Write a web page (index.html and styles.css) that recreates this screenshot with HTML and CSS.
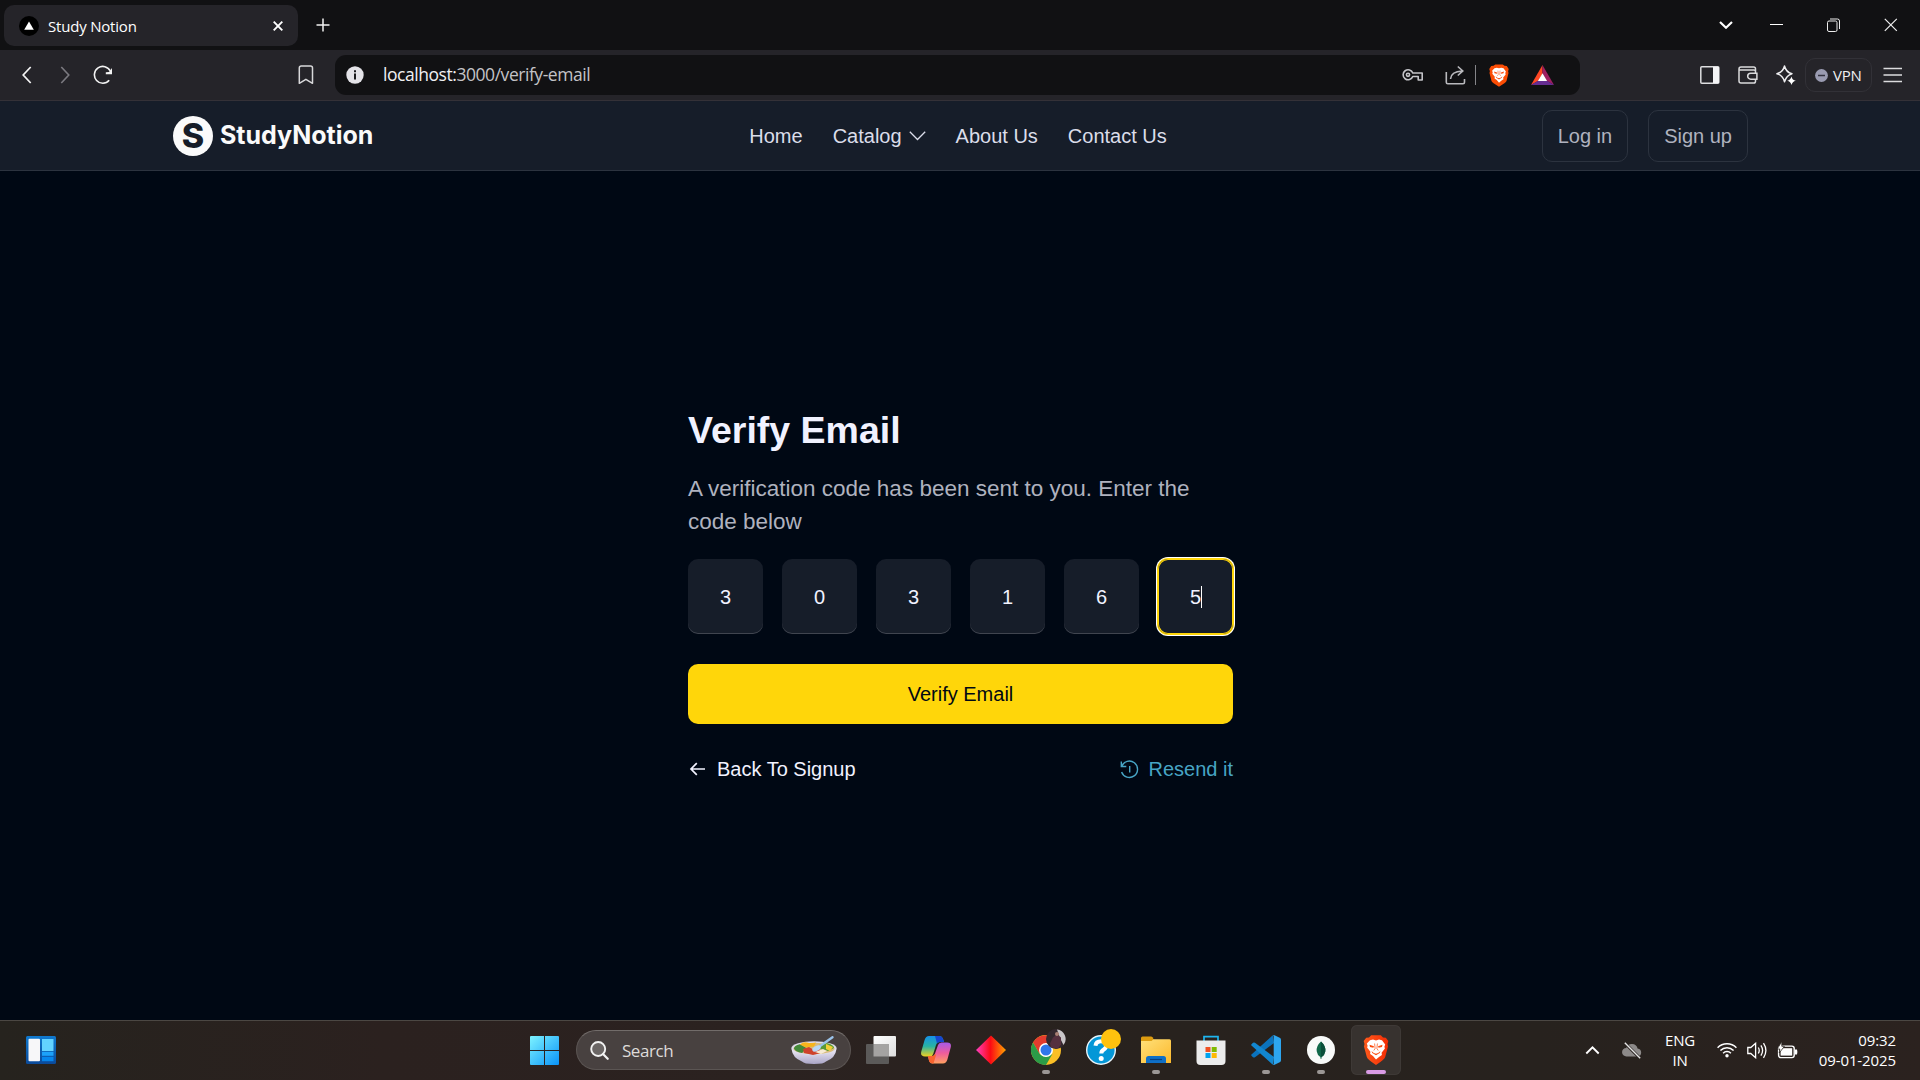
FILE: index.html
```
<!DOCTYPE html>
<html lang="en">
<head>
<meta charset="utf-8">
<title>Study Notion</title>
<link rel="stylesheet" href="styles.css">
</head>
<body>
<svg width="0" height="0" class="defs">
  <defs>
    <linearGradient id="lionG" x1="0" y1="0" x2="1" y2="0"><stop offset="0" stop-color="#ff5a1c"/><stop offset="1" stop-color="#f22c04"/></linearGradient>
    <linearGradient id="winG" x1="0" y1="0" x2="1" y2="1"><stop offset="0" stop-color="#7df3ff"/><stop offset="1" stop-color="#0a93f8"/></linearGradient>
    <linearGradient id="bowlG" x1="0" y1="0" x2="0" y2="1"><stop offset="0" stop-color="#f1effa"/><stop offset="1" stop-color="#aaa5c6"/></linearGradient>
    <linearGradient id="copA" x1="0" y1="0" x2="0" y2="1"><stop offset="0" stop-color="#1690e8"/><stop offset=".5" stop-color="#28b3a4"/><stop offset="1" stop-color="#f0d020"/></linearGradient>
    <linearGradient id="copB" x1="0" y1="0" x2="0" y2="1"><stop offset="0" stop-color="#a65ae8"/><stop offset=".5" stop-color="#ee5c9c"/><stop offset="1" stop-color="#ffa060"/></linearGradient>
    <linearGradient id="diaG"><stop offset="0" stop-color="#ff3fc0"/><stop offset=".48" stop-color="#fb0a14"/><stop offset="1" stop-color="#ffa400"/></linearGradient>
    <linearGradient id="folG" x1="0" y1="0" x2="1" y2="1"><stop offset="0" stop-color="#ffe07a"/><stop offset="1" stop-color="#fcb92c"/></linearGradient>
    <linearGradient id="widG" x1="0" y1="0" x2="0" y2="1"><stop offset="0" stop-color="#0f79cf"/><stop offset="1" stop-color="#0b4a9a"/></linearGradient>
    <linearGradient id="tvG" x1="0" y1="0" x2="1" y2="1"><stop offset="0" stop-color="#fff"/><stop offset="1" stop-color="#ddd"/></linearGradient>
    <symbol id="face" viewBox="0 0 24 28">
      <path d="M6 5.200 9 4.600l3 .8 3-.8 3 .6 3.200 4.300-.8 2.300.5 1.700-3.300 4.200.3 2.200-2.900 2.100L12 24.600l-3-3.600-2.900-2.100.3-2.200-3.300-4.200.5-1.700-.8-2.300z" fill="#fff"/>
      <path d="M5.500 9.800 10 11.300 9.400 12.700 6 12zM18.500 9.800 14 11.300l.6 1.400 3.400-.7zM7.500 16l2.300 2 2.200.7 2.200-.7 2.300-2-.8 2L12 20.300 8.300 18z" fill="#fb4a0c"/>
      <path d="M10.600 8.500l.5 5-1.300 2M13.400 8.500l-.5 5 1.300 2" stroke="#fb4a0c" stroke-width=".7" fill="none"/>
    </symbol>
  </defs>
</svg>

<header class="tabs">
  <div class="tab">
    <svg width="20" height="20" viewBox="0 0 20 20"><circle cx="10" cy="10" r="10" fill="#000"/><path d="M10 5.500l4.800 8.300H5.200z" fill="#fff"/></svg>
    <span class="tab-title">Study Notion</span>
    <svg class="tab-close" width="12" height="12" viewBox="0 0 12 12"><path d="M1.700 1.700l8.600 8.600M10.300 1.700l-8.600 8.600" stroke="#fff" stroke-width="1.900" fill="none"/></svg>
  </div>
  <svg class="plus" width="14" height="14" viewBox="0 0 14 14"><path d="M7 .5v13M.5 7h13" stroke="#f2f2f2" stroke-width="1.500"/></svg>
  <div class="win">
    <svg width="14" height="8" viewBox="0 0 14 8"><path d="M1 1l6 5.700L13 1" stroke="#fff" stroke-width="2.200" fill="none"/></svg>
    <svg width="14" height="14" viewBox="0 0 14 14"><path d="M0 6.500h13" stroke="#fff" stroke-width="1"/></svg>
    <svg width="14" height="14" viewBox="0 0 14 14" fill="none" stroke="#eee"><rect x=".5" y="3" width="9.500" height="10.500" rx="1.500"/><path d="M3 1h7.500q2 0 2 2v8"/></svg>
    <svg width="14" height="14" viewBox="0 0 14 14"><path d="M.8.800l12 12M12.800.800l-12 12" stroke="#eee" stroke-width="1.200"/></svg>
  </div>
</header>

<div class="toolbar">
  <svg class="back" width="10" height="18" viewBox="0 0 10 18"><path d="M8.700 1L1.200 9l7.500 8" stroke="#f4f4f4" stroke-width="1.700" fill="none"/></svg>
  <svg class="fwd" width="10" height="18" viewBox="0 0 10 18"><path d="M1.300 1l7.500 8-7.500 8" stroke="#7b7a80" stroke-width="1.600" fill="none"/></svg>
  <svg class="reload" width="20" height="20" viewBox="0 0 20 20"><path d="M16.200 15.300A8.400 8.400 0 1 1 17.300 6" stroke="#f2f2f2" stroke-width="1.600" fill="none"/><path d="M19 3v6.200h-6.200V7.300L16 7z" fill="#f2f2f2"/></svg>
  <svg class="mark" width="16" height="20" viewBox="0 0 16 20"><path d="M1.300 18.300V3Q1.300 1 3.300 1h9.200q2 0 2 2v15.300L7.900 14.300z" stroke="#d8d8da" stroke-width="1.500" fill="none" stroke-linejoin="round"/></svg>
  <div class="url">
    <svg width="18" height="18" viewBox="0 0 18 18"><circle cx="9" cy="9" r="8.700" fill="#e4e3e8"/><path d="M8 4.200h2v2H8zM8 7.600h2v6H8z" fill="#19191c"/></svg>
    <span class="url-text"><b>localhost:</b>3000/verify-email</span>
    <svg class="key" width="22" height="14" viewBox="0 0 22 14" fill="none" stroke="#c4c4c8" stroke-width="1.600"><path d="M10.800 5H20.200v7h-4V8.500h-5.400A5 5 0 1 1 10.800 5z" stroke-linejoin="round"/><circle cx="6" cy="6.800" r="1.600"/></svg>
    <svg class="share" width="21" height="20" viewBox="0 0 21 20" fill="none" stroke="#b9b9bd" stroke-width="1.600"><path d="M1.300 7v10.200q0 1.500 1.500 1.500H18q1.500 0 1.500-1.500V14M5.500 14Q6 6.500 17.300 6M12.800 1.500l5 4.500-5 4.500"/></svg>
    <i class="bar"></i>
    <svg class="brave" width="20" height="23" viewBox="0 0 20 23"><path d="M4.500 1.800 6.300.4h7.400l1.800 1.400 2.300.2 1.900 3-.6 2.200.4 1.800-2 8Q17 18.600 10 22.800 3 18.600 2.500 17L.5 9l.4-1.800L.3 5l1.900-3z" fill="#fb4d05"/><use href="#face" x="1" y="0" width="18" height="21.500"/></svg>
    <svg class="bat" width="23" height="20" viewBox="0 0 23 20"><path d="M11.500 0L0 20l7.400-4.200 4.100-7.400z" fill="#ff4724"/><path d="M11.500 0L23 20l-7.400-4.200-4.100-7.400z" fill="#9e1f63"/><path d="M0 20h23l-7.400-4.400H7.400z" fill="#662d91"/><path d="M11.500 8.200l4.600 7.900H6.900z" fill="#fff"/></svg>
  </div>
  <div class="tools">
    <svg width="20" height="18" viewBox="0 0 20 18"><rect x=".8" y=".8" width="18" height="16.400" rx="1" fill="none" stroke="#dedee0" stroke-width="1.500"/><path d="M13 1h6v16h-6z" fill="#f4f4f6"/></svg>
    <svg width="20" height="18" viewBox="0 0 20 18" fill="none" stroke="#dadadc" stroke-width="1.500"><path d="M17.500 5V2.800q0-1.800-1.800-1.800H3Q1 1 1 3v12q0 2 2 2h12.700q1.800 0 1.800-1.800V5.300Q17.500 4 16 4H1.500"/><path d="M18.900 7.200h-6.200a3 3 0 0 0 0 6h6.200z" fill="#252429"/></svg>
    <svg width="20" height="20" viewBox="0 0 20 20"><path d="M8.500 1q1.500 6.300 7.500 7.700-5.500 1.500-7.500 8-1.800-6.500-7.600-8Q7 7.300 8.500 1z" fill="none" stroke="#efeff1" stroke-width="1.500" stroke-linejoin="round"/><path d="M15.500 11.500q.8 3.800 4.300 4.300-3.500.7-4.300 4.200-.8-3.500-4.300-4.200 3.500-.7 4.300-4.300z" fill="#fff"/></svg>
    <div class="vpn"><svg width="13" height="13" viewBox="0 0 13 13"><circle cx="6.500" cy="6.500" r="6.400" fill="#9a9bb1"/><path d="M3 6.500h7" stroke="#333340" stroke-width="1.500"/></svg><span>VPN</span></div>
    <svg class="menu" width="20" height="16" viewBox="0 0 20 16"><path d="M.5 1.500h18.500M.5 8h18.500M.5 14.500h18.500" stroke="#dcdcde" stroke-width="1.600"/></svg>
  </div>
</div>

<nav class="nav">
  <div class="logo">
    <span class="disc">S</span>
    <span class="word">StudyNotion</span>
  </div>
  <div class="links">
    <a>Home</a>
    <a>Catalog<svg width="17" height="10" viewBox="0 0 17 10"><path d="M.8.800l7.700 7.700L16.200.800" fill="none" stroke="#dbddea" stroke-width="1.300"/></svg></a>
    <a>About Us</a>
    <a>Contact Us</a>
  </div>
  <div class="auth"><a class="btn">Log in</a><a class="btn">Sign up</a></div>
</nav>

<main class="page">
  <section class="card">
    <h1>Verify Email</h1>
    <p>A verification code has been sent to you. Enter the code below</p>
    <div class="otp"><span>3</span><span>0</span><span>3</span><span>1</span><span>6</span><span class="focus">5<i></i></span></div>
    <div class="submit">Verify Email</div>
    <div class="foot">
      <span class="backlink"><svg width="22" height="20" viewBox="0 0 22 20"><path d="M18 10H4.500M9.800 4.200L4 10l5.800 5.800" fill="none" stroke="#f1f2ff" stroke-width="1.700"/></svg>Back To Signup</span>
      <span class="resend"><svg width="19" height="19" viewBox="0 0 19 19" fill="none" stroke="#47a5c5" stroke-width="1.400"><path d="M1.300 1.500v5h5M1.700 6.300A8.200 8.200 0 1 1 1.600 12M9.700 6v6.500"/></svg>Resend it</span>
    </div>
  </section>
</main>

<footer class="taskbar">
  <svg class="widgets" width="30" height="28" viewBox="0 0 30 28"><rect width="30" height="28" rx="1.500" fill="url(#widG)"/><rect x="2.500" y="2.700" width="11.500" height="22.500" rx="1" fill="#f7f7f9"/><path d="M16 3h11.500v12H16z" fill="#63d3ff"/><path d="M16 15.800h11.500v4H16z" fill="#1ca2fa"/><path d="M16 20.800h11.500v4.400H16z" fill="#0686ec"/></svg>
  <div class="tile start"><svg width="29" height="29" viewBox="0 0 29 29"><path d="M0 1q0-1 1-1h13v14H0zM15 0h13q1 0 1 1v13H15zM0 15h14v14H1q-1 0-1-1zM15 15h14v13q0 1-1 1H15z" fill="url(#winG)"/></svg></div>
  <div class="search">
    <svg width="19" height="19" viewBox="0 0 19 19"><circle cx="8.200" cy="8" r="7" fill="#6b6665" stroke="#f2f2f2" stroke-width="1.900"/><path d="M13 13l4.700 4.800" stroke="#f2f2f2" stroke-width="2.200" stroke-linecap="round"/></svg>
    <span>Search</span>
    <svg class="bowl" width="46" height="28" viewBox="0 0 46 28"><path d="M.4 12.500Q1.500 22 11 25.500q2 2.500 12 2.500t12-2.500Q44.500 22 45.600 12.500z" fill="url(#bowlG)"/><ellipse cx="23" cy="12" rx="22.600" ry="6.800" fill="#dedbea"/><ellipse cx="23" cy="12.500" rx="20.500" ry="5.700" fill="#d9bb7a"/><path d="M3 12.500q0-3 6-4.300l7 4-5 4.800q-7-1.500-8-4.500z" fill="#43893a"/><path d="M9 8.500q3-3 7-2t9 0l-2 4-8 1z" fill="#f7b51c"/><path d="M28 9l8-2q7 2 7 5l-6 3-8-2z" fill="#5a9a35"/><path d="M35 8l7 3-3 4-4-2z" fill="#f4cf37"/><path d="M12 13l6-2 5 3 6-1 1 4-8 2-9-2z" fill="#ce422c"/><path d="M24 16l8-3 4 2-6 3z" fill="#f6ead2"/><path d="M27 11.500L41.500 1.200" stroke="#9bc3ea" stroke-width="2.300" stroke-linecap="round"/><ellipse cx="25.500" cy="12.500" rx="4.500" ry="2.500" transform="rotate(-25 25.500 12.500)" fill="#b9d8f4"/></svg>
  </div>
  <div class="apps">
    <div class="tile"><svg width="30" height="28" viewBox="0 0 30 28"><rect x="7.500" y="0" width="22.500" height="20.500" rx="1" fill="url(#tvG)"/><rect x="0" y="8" width="23" height="20" rx="1" fill="#5b5a59"/><path d="M7.500 8H23v12.500H7.500z" fill="#a4a3a2"/></svg></div>
    <div class="tile"><svg width="30" height="28" viewBox="0 0 30 28"><path d="M8 0h10.500q2.600 0 3.400 2.500L23 6h-4q-3 0-4 3l-2.800 9q-.8 2.500-3.400 2.500H4q-5 0-3.700-5L3.600 4Q4.800 0 8 0z" fill="url(#copA)"/><path d="M14 0h4.500q2.600 0 3.400 2.500L23 6h-4q-2 0-3 1.500z" fill="#1746cf"/><path d="M22 27.500H11.500q-2.600 0-3.400-2.500L7 20.500h3q3 0 4-3L17 9q1-2.500 3.400-2.500H26q5 0 3.700 5L26.400 23.500Q25.200 27.500 22 27.500z" fill="url(#copB)"/><path d="M7 20h4q2 0 3-2l1 1-2.500 8.500h-1q-2.600 0-3.400-2.500z" fill="#f8642f"/></svg></div>
    <div class="tile"><svg width="30" height="30" viewBox="0 0 30 30"><path d="M15 .5L30 15 15 29.500 0 15z" fill="url(#diaG)"/></svg></div>
    <div class="tile dot"><svg width="30" height="30" viewBox="0 0 30 30"><circle cx="15" cy="15" r="15" fill="#fbbf26"/><path d="M2 7.500L8.500 18.800 15 8h13A15 15 0 0 0 2 7.500z" fill="#e33b2e"/><path d="M2 7.500A15 15 0 0 0 15 30l6.500-11.200q-7 6-13 0z" fill="#2b9c48"/><circle cx="15" cy="15" r="7" fill="#fff"/><circle cx="15" cy="15" r="5.500" fill="#2f76ea"/></svg><svg class="badge" width="20" height="20" viewBox="0 0 20 20"><circle cx="10" cy="10" r="10" fill="#33282e"/><path d="M11 .5a9.600 9.600 0 0 1 6.500 15.500L14 9z" fill="#c9c6c8"/><path d="M5 18.500l-1-4 3-6 4-3 4 3v7l-3 4z" fill="#55303f"/><circle cx="11" cy="5" r="2" fill="#a98074"/></svg></div>
    <div class="tile"><svg width="30" height="30" viewBox="0 0 30 30"><circle cx="15" cy="15" r="14.300" fill="#0497d7" stroke="#e9f5fb" stroke-width="1.400"/><path d="M9.500 10.800Q10 6.300 15 6.300t5.300 4.200q0 2.500-2.800 4.200Q15.300 16 15.300 18.500" fill="none" stroke="#fff" stroke-width="4"/><circle cx="15.200" cy="23.500" r="2.500" fill="#fff"/></svg><i class="badge sun"></i></div>
    <div class="tile dot"><svg width="30" height="28" viewBox="0 0 30 28"><path d="M0 2q0-1.500 1.500-1.500H10q1 0 1.500.8L13.500 5H0z" fill="#dd9c10"/><path d="M0 5h10.500l2-1.700H28.500q1.500 0 1.500 1.500V27H0z" fill="url(#folG)"/><path d="M5 27v-4.500Q5 20 7.500 20h15q2.500 0 2.500 2.500V27z" fill="#0f6fc6"/><path d="M9 23.500h12" stroke="#083f80" stroke-width="1.200"/></svg></div>
    <div class="tile"><svg width="30" height="30" viewBox="0 0 30 30"><path d="M8 6V1.700h14V6" fill="none" stroke="#1eb5ef" stroke-width="1.700"/><path d="M.5 5.500h29V26q0 4-4 4h-21q-4 0-4-4z" fill="#ececec"/><path d="M9.500 12h5v5h-5z" fill="#f05022"/><path d="M15.700 12h5v5h-5z" fill="#7fba00"/><path d="M9.500 18h5v5h-5z" fill="#00a3ee"/><path d="M15.700 18h5v5h-5z" fill="#ffb901"/></svg></div>
    <div class="tile dot"><svg width="30" height="30" viewBox="0 0 30 30"><path d="M1 19L21.800.300 23 8 4 22.200q-1 .7-2 0L.5 20.700q-.8-.9.500-1.700z" fill="#0b73bd"/><path d="M1 11Q-.3 10.200.5 9.300L2 7.800q1-.8 2 0L23 22l-1.200 7.700z" fill="#1287d0"/><path d="M21.800.300Q22.500-.2 23.500.300l5.200 2.500q1.300.6 1.300 2v20.400q0 1.400-1.300 2l-5.200 2.500q-1 .5-1.700 0 .9.200.9-1.200V1.500q0-1.400-.9-1.200z" fill="#2da6f0"/></svg></div>
    <div class="tile dot"><svg width="28" height="28" viewBox="0 0 28 28"><circle cx="14" cy="14" r="14" fill="#f8faf9"/><path d="M14 5.500q5 4.500 4.300 9.800-.6 4-3.600 5.700l-.4 2h-.6l-.4-2q-3-1.700-3.600-5.700Q9 10 14 5.500z" fill="#11684a"/><path d="M14 5.500q5 4.500 4.300 9.800-.6 4-3.600 5.700l-.7-1z" fill="#0b4f3a"/></svg></div>
    <div class="tile active"><svg width="26" height="30" viewBox="0 0 26 30"><path d="M6 2.500 8.200.2h9.600L20 2.500l2.800.2L25.300 6l-.8 3 .5 2.500-2.800 10.500Q21.500 24.500 13 30 4.500 24.500 3.800 22L1 11.500 1.500 9 .7 6l2.500-3.300z" fill="url(#lionG)"/><use href="#face" x="1" y="0" width="24" height="28"/></svg></div>
  </div>
  <div class="tray">
    <svg class="up" width="15" height="10" viewBox="0 0 15 10"><path d="M1.300 8.500l6.200-6.200 6.200 6.200" fill="none" stroke="#fff" stroke-width="1.900"/></svg>
    <svg class="cloud" width="20" height="17" viewBox="0 0 20 17"><path d="M4.500 14.500a4.300 4.300 0 0 1-.3-8.600 6 6 0 0 1 11.400.5 4.100 4.100 0 0 1 .2 8.100z" fill="#8d8a89"/><path d="M2.500.800l15.500 15.500" stroke="#2a2420" stroke-width="3"/><path d="M2.800.800l15.400 15.400" stroke="#e5e5e5" stroke-width="1.400"/></svg>
    <div class="lang"><span>ENG</span><span>IN</span></div>
    <svg class="wifi" width="20" height="16" viewBox="0 0 20 16" fill="none" stroke="#fff" stroke-width="1.500"><path d="M.6 5.700a13.300 13.300 0 0 1 18.800 0M3.400 8.500a9.300 9.300 0 0 1 13.200 0M6.100 11.200a5.500 5.500 0 0 1 7.800 0"/><circle cx="10" cy="13.800" r="1.700" fill="#fff" stroke="none"/></svg>
    <svg class="vol" width="20" height="17" viewBox="0 0 20 17" fill="none" stroke="#fff" stroke-width="1.300"><path d="M.8 5.500h3L8.600 1.300v14.400L3.800 11.500h-3zM11.300 5.500q1.900 3 0 6M13.900 3.300q3.400 5.200 0 10.400M16.500 1.200q4.800 7.300 0 14.600"/></svg>
    <svg class="batt" width="21" height="17" viewBox="0 0 21 17"><rect x="1.600" y="4.100" width="15.600" height="11.500" rx="2.300" fill="none" stroke="#fff" stroke-width="1.400"/><rect x="3.600" y="6.200" width="11.600" height="7.400" fill="#fff"/><path d="M18 7.500h2q.8 2.500 0 5h-2z" fill="#fff"/><path d="M4.800-.5L.2 7h2.600l-.6 4L7.400 4.300H4.800z" fill="#fff" stroke="#2a2420" stroke-width=".8"/></svg>
    <div class="clock"><span>09:32</span><span>09-01-2025</span></div>
  </div>
</footer>
</body>
</html>
```
FILE: styles.css
```
* { box-sizing: border-box; }
body {
  margin: 0; width: 1920px; height: 1080px; overflow: hidden;
  display: flex; flex-direction: column;
  background: #000814; color: #fff;
  font-family: "Liberation Sans", Arial, sans-serif;
}
svg { display: block; flex: none; }
.defs { position: absolute; }
i { display: block; }

.tabs { height: 50px; flex: none; background: #111113; display: flex; align-items: center; padding-left: 4px; font-family: "Open Sans", sans-serif; }
.tab { width: 294px; height: 41px; margin-top: 1px; border-radius: 10px; background: #252429; display: flex; align-items: center; padding: 0 14px 0 15px; }
.tab-title { margin-left: 9px; font-size: 15px; letter-spacing: -.2px; white-space: nowrap; }
.tab-close { margin-left: auto; }
.plus { margin-left: 18px; }
.win { margin-left: auto; margin-right: 22px; display: flex; align-items: center; gap: 43px; }
.win svg:first-child { margin-right: -6px; }

.toolbar { height: 51px; flex: none; background: #252429; border-bottom: 1px solid #343137; display: flex; align-items: center; padding-left: 22px; font-family: "Open Sans", sans-serif; }
.fwd { margin-left: 28px; }
.reload { margin-left: 23px; }
.mark { margin-left: 185px; }
.url { margin-left: 21px; width: 1245px; height: 40px; border-radius: 11px; background: #111113; display: flex; align-items: center; padding-left: 11px; }
.url-text { margin-left: 19px; width: 1019px; margin-top: -2px; font-size: 17.500px; letter-spacing: -.45px; color: #c3c3c7; white-space: nowrap; }
.url-text b { font-weight: 400; color: #f0f0f2; }
.share { margin-left: 21px; }
.bar { margin-left: 9px; width: 1px; height: 20px; background: #858589; }
.brave { margin-left: 13px; }
.bat { margin-left: 22px; }
.tools { display: flex; align-items: center; margin-left: 120px; }
.tools svg + svg { margin-left: 18px; }
.vpn { margin-left: 9px; width: 67px; height: 34px; border: 1px solid #323137; border-radius: 10px; display: flex; align-items: center; padding-left: 9px; font-size: 15px; letter-spacing: -.2px; }
.vpn span { margin-left: 5px; margin-top: -1px; color: #f0f0f2; }
.menu { margin-left: 11px; }

.nav { height: 70px; flex: none; background: #161d29; border-bottom: 1px solid #2c333f; display: flex; justify-content: space-between; align-items: center; padding: 0 172px 0 173px; font-size: 20px; }
.logo { display: flex; align-items: center; gap: 7px; }
.disc { width: 40px; height: 40px; border-radius: 50%; background: #fafafa; color: #161d29; display: flex; align-items: center; justify-content: center; font: 800 34px/40px Inter, sans-serif; }
.word { font: 700 25px/30px Inter, sans-serif; color: #fafafa; margin-top: -2px; }
.links { display: flex; gap: 30px; color: #dbddea; margin: 1px 0 0 1px; }
.links a { display: flex; align-items: center; gap: 7px; }
.auth { display: flex; gap: 20px; color: #afb2bf; }
.btn { height: 52px; line-height: 50px; border: 1px solid #2c333f; border-radius: 10px; padding: 0 15px; }

.page { flex: 1; display: flex; align-items: center; justify-content: center; }
.card { width: 545px; margin-left: 1px; }
h1 { margin: 0; font-size: 37.500px; line-height: 47.500px; font-weight: 700; color: #f1f2ff; }
p { margin: 19px 0 21px; font-size: 22.500px; line-height: 32.500px; color: #afb2bf; }
.otp { display: flex; justify-content: space-between; }
.otp span { width: 75px; height: 75px; padding-top: 1px; border-radius: 10px; background: #161d29; box-shadow: inset 0 -1px 0 rgba(255,255,255,.18); display: flex; align-items: center; justify-content: center; font-size: 20px; color: #f1f2ff; }
.otp .focus { box-shadow: 0 0 0 1px #ffd60a, 0 0 0 2px #fff, inset 0 0 0 1px #ffd60a; }
.otp .focus i { width: 1px; height: 22px; background: #fff; margin-right: -1px; }
.submit { margin-top: 30px; height: 60px; border-radius: 10px; background: #ffd60a; color: #000814; font-size: 20px; display: flex; align-items: center; justify-content: center; }
.foot { margin-top: 30px; height: 30px; display: flex; justify-content: space-between; font-size: 20px; color: #f1f2ff; }
.foot span { display: flex; align-items: center; }
.backlink svg { margin-right: 8px; margin-left: -1px; }
.resend { color: #47a5c5; }
.resend svg { margin-right: 10px; }

.taskbar { height: 60px; flex: none; border-top: 1px solid #4b4743; background: linear-gradient(90deg, #26231e, #2b211f 20%, #2b2220 40%, #28221e 60%, #27221e 80%, #2b221f); display: flex; align-items: center; padding: 0 0 1px 26px; font-family: "Open Sans", sans-serif; }
.tile { width: 55px; height: 50px; display: flex; align-items: center; justify-content: center; position: relative; }
.start { margin-left: 461px; }
.search { margin-left: 4px; width: 275px; height: 40px; border-radius: 20px; background: #484140; border: 1px solid #5b5553; border-top-color: #726c6a; display: flex; align-items: center; padding: 0 13px 0 13px; font-size: 17px; color: #dedbd9; }
.search span { margin-left: 13px; letter-spacing: -.45px; }
.bowl { margin-left: auto; }
.apps { margin-left: 2px; display: flex; }
.dot::after { content: ""; position: absolute; left: 24px; bottom: 1px; width: 8px; height: 4px; border-radius: 2px; background: #9b9795; }
.active { width: 50px; margin-left: 3px; background: #37322f; border-radius: 6px; box-shadow: inset 0 0 0 1px #3e3936; }
.active::after { content: ""; position: absolute; left: 15px; bottom: 1px; width: 20px; height: 4px; border-radius: 2px; background: #d99be5; }
.badge { position: absolute; left: 28px; top: 4px; width: 20px; height: 20px; }
.sun { border-radius: 50%; background: #ffc20e; }
.tray { margin-left: auto; margin-right: 24px; display: flex; align-items: center; font-size: 15px; letter-spacing: -.1px; line-height: 20px; }
.cloud { margin-left: 22px; }
.lang { width: 50px; margin-left: 13px; display: flex; flex-direction: column; align-items: center; letter-spacing: -.2px; }
.wifi { margin-left: 12px; }
.vol { margin-left: 10px; }
.batt { margin-left: 10px; }
.clock { width: 98px; display: flex; flex-direction: column; align-items: flex-end; }
```
